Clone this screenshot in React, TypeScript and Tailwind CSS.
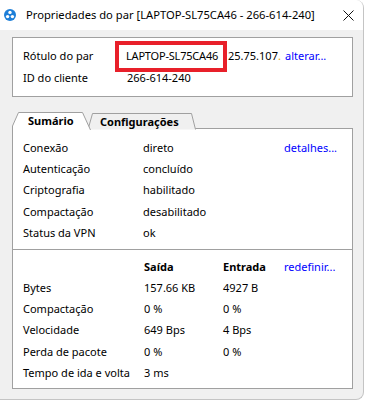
import React from "react";

const font = { fontFamily: '"Noto Sans", "Open Sans", sans-serif' };

const PeerIcon = () => (
  <svg width="12" height="12" viewBox="0 0 12 12">
    <circle cx="6" cy="6" r="6" fill="#1e7fd8" />
    <circle cx="6" cy="3.4" r="1.7" fill="#fff" />
    <circle cx="3.6" cy="7.6" r="1.7" fill="#fff" />
    <circle cx="8.4" cy="7.6" r="1.7" fill="#fff" />
  </svg>
);

const CloseIcon = () => (
  <svg width="11" height="11" viewBox="0 0 11 11">
    <path d="M0.5 0.5 L10.5 10.5 M10.5 0.5 L0.5 10.5" stroke="#111" strokeWidth="1" />
  </svg>
);

const summary = [
  ["Conexão", "direto"],
  ["Autenticação", "concluído"],
  ["Criptografia", "habilitado"],
  ["Compactação", "desabilitado"],
  ["Status da VPN", "ok"],
];

const stats = [
  ["Bytes", "157.66 KB", "4927 B"],
  ["Compactação", "0 %", "0 %"],
  ["Velocidade", "649 Bps", "4 Bps"],
  ["Perda de pacote", "0 %", "0 %"],
  ["Tempo de ida e volta", "3 ms", ""],
];

export default function App() {
  return (
    <div className="w-[365px] h-[401px] bg-white text-[11px] text-black whitespace-nowrap" style={font}>
      <div className="w-[364px] h-[400px] flex flex-col bg-[#f0f0f0] border-r border-b border-[#c4c4c4] rounded-tr-[8px] rounded-br-[8px] overflow-hidden">
        {/* title bar */}
        <div className="h-[30px] bg-white flex items-center pl-[4px] pr-[9px] shrink-0">
          <PeerIcon />
          <span className="ml-[10px] flex-1 text-[11.2px] leading-none">
            Propriedades do par [LAPTOP-SL75CA46 - 266-614-240]
          </span>
          <CloseIcon />
        </div>

        <div className="pl-[12px] pr-[10px] flex flex-col flex-1">
          {/* peer box */}
          <div className="mt-[7px] h-[60px] bg-white border border-[#a0a0a0] pt-[7px] pl-[10px]">
            <div className="h-[22px] flex items-center">
              <span className="w-[103px]">Rótulo do par</span>
              <span className="relative w-[102px] tracking-[-0.2px]">
                LAPTOP-SL75CA46
                <span className="absolute left-[-11px] top-[-7px] w-[112px] h-[31px] border-4 border-[#e8202a]"></span>
              </span>
              <span className="w-[57px]">
                25.75.107<span className="text-[#e0a000]">.</span>
              </span>
              <span className="text-[#0000ff]">alterar...</span>
            </div>
            <div className="h-[22px] flex items-center">
              <span className="w-[104px]">ID do cliente</span>
              <span>266-614-240</span>
            </div>
          </div>

          {/* tabs */}
          <div className="mt-[15px] h-[17px] flex relative z-10 -mb-px">
            <div className="relative w-[79px] h-[18px] z-10">
              <svg className="absolute inset-0" width="79" height="18" viewBox="0 0 79 18">
                <path d="M0.5 18 L0.5 14 L6.5 0.5 L70.5 0.5 L78.5 18" fill="#fff" stroke="#a0a0a0" />
              </svg>
              <span className="relative block pl-[16px] pt-[1px] font-bold leading-[16px]">Sumário</span>
            </div>
            <div className="relative w-[108px] h-[16px] mt-[1px] -ml-[3px]">
              <svg className="absolute inset-0" width="108" height="17" viewBox="0 0 108 17">
                <path d="M0 16.5 L4.5 0.5 L103.5 0.5 L107.5 16.5" fill="#f0f0f0" stroke="#a0a0a0" />
              </svg>
              <span className="relative block pl-[12px] pt-[1px] font-bold leading-[15px]">Configurações</span>
            </div>
          </div>

          {/* tab panel */}
          <div className="h-[261px] bg-white border border-[#a0a0a0] flex flex-col">
            <div className="pt-[8.5px] pb-[5px] pl-[10px]">
              {summary.map(([k, v], i) => (
                <div key={k} className="h-[21.25px] flex items-center">
                  <span className="w-[120px]">{k}</span>
                  <span className="w-[141px]">{v}</span>
                  {i === 0 && <span className="text-[#0000ff]">detalhes...</span>}
                </div>
              ))}
            </div>
            <div className="h-px bg-[#a0a0a0]"></div>
            <div className="pt-[6.5px] pl-[10px]">
              <div className="h-[21.25px] flex items-center font-bold">
                <span className="w-[121px]"></span>
                <span className="w-[79px]">Saída</span>
                <span className="w-[61px]">Entrada</span>
                <span className="font-normal text-[#0000ff]">redefinir...</span>
              </div>
              {stats.map(([k, a, b]) => (
                <div key={k} className="h-[21.25px] flex items-center">
                  <span className="w-[121px]">{k}</span>
                  <span className="w-[79px]">{a}</span>
                  <span className="w-[61px]">{b}</span>
                </div>
              ))}
            </div>
          </div>
        </div>
      </div>
    </div>
  );
}
